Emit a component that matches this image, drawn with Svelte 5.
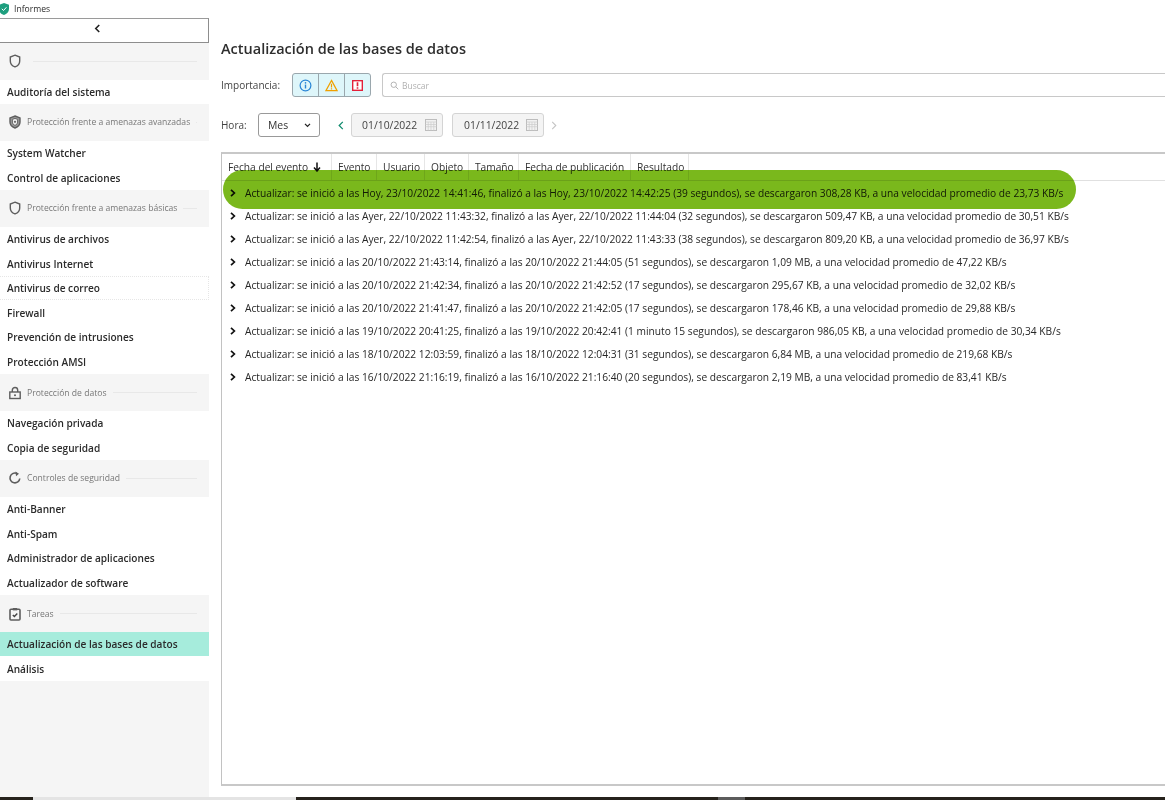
<script>
  const groups = [
    { icon: 'shield', label: '', items: ['Auditoría del sistema'], h: 'first' },
    { icon: 'shield2', label: 'Protección frente a amenazas avanzadas', items: ['System Watcher', 'Control de aplicaciones'] },
    { icon: 'shield', label: 'Protección frente a amenazas básicas', items: ['Antivirus de archivos', 'Antivirus Internet', 'Antivirus de correo', 'Firewall', 'Prevención de intrusiones', 'Protección AMSI'] },
    { icon: 'lock', label: 'Protección de datos', items: ['Navegación privada', 'Copia de seguridad'] },
    { icon: 'sync', label: 'Controles de seguridad', items: ['Anti-Banner', 'Anti-Spam', 'Administrador de aplicaciones', 'Actualizador de software'] },
    { icon: 'task', label: 'Tareas', items: ['Actualización de las bases de datos', 'Análisis'] }
  ];
  const columns = [
    { label: 'Fecha del evento', w: 110, sort: true },
    { label: 'Evento', w: 45 },
    { label: 'Usuario', w: 48 },
    { label: 'Objeto', w: 44 },
    { label: 'Tamaño', w: 50 },
    { label: 'Fecha de publicación', w: 112 },
    { label: 'Resultado', w: 58 }
  ];
  const rows = [
    'Actualizar: se inició a las Hoy, 23/10/2022 14:41:46, finalizó a las Hoy, 23/10/2022 14:42:25 (39 segundos), se descargaron 308,28 KB, a una velocidad promedio de 23,73 KB/s',
    'Actualizar: se inició a las Ayer, 22/10/2022 11:43:32, finalizó a las Ayer, 22/10/2022 11:44:04 (32 segundos), se descargaron 509,47 KB, a una velocidad promedio de 30,51 KB/s',
    'Actualizar: se inició a las Ayer, 22/10/2022 11:42:54, finalizó a las Ayer, 22/10/2022 11:43:33 (38 segundos), se descargaron 809,20 KB, a una velocidad promedio de 36,97 KB/s',
    'Actualizar: se inició a las 20/10/2022 21:43:14, finalizó a las 20/10/2022 21:44:05 (51 segundos), se descargaron 1,09 MB, a una velocidad promedio de 47,22 KB/s',
    'Actualizar: se inició a las 20/10/2022 21:42:34, finalizó a las 20/10/2022 21:42:52 (17 segundos), se descargaron 295,67 KB, a una velocidad promedio de 32,02 KB/s',
    'Actualizar: se inició a las 20/10/2022 21:41:47, finalizó a las 20/10/2022 21:42:05 (17 segundos), se descargaron 178,46 KB, a una velocidad promedio de 29,88 KB/s',
    'Actualizar: se inició a las 19/10/2022 20:41:25, finalizó a las 19/10/2022 20:42:41 (1 minuto 15 segundos), se descargaron 986,05 KB, a una velocidad promedio de 30,34 KB/s',
    'Actualizar: se inició a las 18/10/2022 12:03:59, finalizó a las 18/10/2022 12:04:31 (31 segundos), se descargaron 6,84 MB, a una velocidad promedio de 219,68 KB/s',
    'Actualizar: se inició a las 16/10/2022 21:16:19, finalizó a las 16/10/2022 21:16:40 (20 segundos), se descargaron 2,19 MB, a una velocidad promedio de 83,41 KB/s'
  ];
</script>

{#snippet calendar()}
  <svg class="cal" viewBox="0 0 12 12" width="12" height="12">
    <rect x="0.5" y="0.5" width="11" height="11" fill="#f2f2f2" stroke="#bdbdbd"/>
    <path d="M0.5 3h11M0.5 5.5h11M0.5 7.7h11M3.2 3v8.5M6 3v8.5M8.8 3v8.5" stroke="#cdcdcd" stroke-width="0.7" fill="none"/>
  </svg>
{/snippet}

{#snippet groupIcon(name)}
  <svg viewBox="0 0 14 14" width="14" height="14" fill="none" stroke="#5e5e5e" stroke-width="1.400">
    {#if name === 'shield'}
      <path d="M7 1.200 11.700 3v4c0 3-2 5-4.700 5.900C4.300 12 2.300 10 2.300 7V3z"/>
    {:else if name === 'shield2'}
      <path d="M7 1 12 2.900v4.200c0 3-2.200 5-5 5.900-2.800-.9-5-2.900-5-5.900V2.900z" fill="#999"/>
      <path d="M7 3.400 9.600 4.400v2.700c0 1.500-1 2.600-2.600 3.300-1.600-.7-2.600-1.800-2.600-3.300V4.400z" fill="#eee" stroke="#666" stroke-width="1"/>
      <circle cx="7" cy="6.800" r="1.100" fill="#666" stroke="none"/>
    {:else if name === 'lock'}
      <path d="M4.300 6V4.200a2.700 2.700 0 0 1 5.400 0V6" />
      <rect x="1.800" y="6" width="10.400" height="6.500" />
      <circle cx="7" cy="9.200" r="1" fill="#5e5e5e" stroke="none"/>
    {:else if name === 'sync'}
      <path d="M11.800 7.500A4.900 4.900 0 1 1 8.500 2.300" stroke-width="1.600"/>
      <path d="M7.500 .5 11 2.800 8 5.200z" fill="#5e5e5e" stroke="none"/>
    {:else}
      <rect x="2" y="2.300" width="10" height="10.700" rx="1" stroke-width="1.600"/>
      <rect x="4.800" y="1" width="4.400" height="2.400" fill="#5e5e5e" stroke="none"/>
      <path d="M4.800 8 6.400 9.600 9.300 6.500" stroke="#444"/>
    {/if}
  </svg>
{/snippet}

<div class="app">
  <header class="titlebar">
    <svg class="logo" viewBox="0 0 10 12" width="10" height="12">
      <path d="M5 0 10 1.800V6c0 3-2.200 4.900-5 6-2.800-1.100-5-3-5-6V1.800z" fill="#1e9f7f"/>
      <path d="M2.800 5.800 4.500 7.500 7.400 4.300" fill="none" stroke="#fff" stroke-width="1"/>
    </svg>
    <span>Informes</span>
  </header>

  <div class="body">
    <aside class="sidebar">
      <button class="collapse" aria-label="Contraer">
        <svg viewBox="0 0 8 10" width="7" height="9"><path d="M6 1 2 5l4 4" fill="none" stroke="#222" stroke-width="1.800"/></svg>
      </button>
      {#each groups as g}
        <div class="group" class:tall={g.h === 'first'}>
          <span class="gicon">{@render groupIcon(g.icon)}</span>
          {#if g.label}<span class="glabel">{g.label}</span>{/if}
          <span class="gline"></span>
        </div>
        {#each g.items as item}
          <div class="item" class:active={item === 'Actualización de las bases de datos'} class:dotted={item === 'Antivirus de correo'}>{item}</div>
        {/each}
      {/each}
      <div class="rest"></div>
    </aside>

    <main class="main">
      <h1>Actualización de las bases de datos</h1>

      <div class="filter">
        <span class="lbl">Importancia:</span>
        <div class="levels">
          <span class="lvl">
            <svg viewBox="0 0 14 14" width="13" height="13"><circle cx="7" cy="7" r="5.800" fill="none" stroke="#2a86d6" stroke-width="1.300"/><path d="M7 6v4.200" stroke="#2a86d6" stroke-width="1.500"/><circle cx="7" cy="4.100" r=".9" fill="#2a86d6"/></svg>
          </span>
          <span class="lvl">
            <svg viewBox="0 0 14 14" width="13" height="13"><path d="M7 1.500 13 12.500H1z" fill="none" stroke="#f0a000" stroke-width="1.300"/><path d="M7 5.200v4M7 10v1.300" stroke="#f0a000" stroke-width="1.300"/></svg>
          </span>
          <span class="lvl">
            <svg viewBox="0 0 12 12" width="11" height="11"><rect x=".75" y=".75" width="10.500" height="10.500" fill="#fff" stroke="#e3203a" stroke-width="1.500"/><path d="M6 2.500v4.300M6 8v1.600" stroke="#e3203a" stroke-width="1.800"/></svg>
          </span>
        </div>
        <div class="search">
          <svg viewBox="0 0 12 12" width="9" height="9"><circle cx="5" cy="5" r="3.600" fill="none" stroke="#aaa" stroke-width="1.200"/><path d="M7.700 7.700 11 11" stroke="#aaa" stroke-width="1.200"/></svg>
          <span>Buscar</span>
        </div>
      </div>

      <div class="filter time">
        <span class="lbl">Hora:</span>
        <div class="select">
          <span>Mes</span>
          <svg viewBox="0 0 8 6" width="7" height="5"><path d="M1 1l3 3 3-3" fill="none" stroke="#222" stroke-width="1.500"/></svg>
        </div>
        <svg class="prev" viewBox="0 0 6 10" width="6" height="9"><path d="M5 1 1 5l4 4" fill="none" stroke="#0f8a6d" stroke-width="1.400"/></svg>
        <div class="date"><span>01/10/2022</span>{@render calendar()}</div>
        <div class="date"><span>01/11/2022</span>{@render calendar()}</div>
        <svg class="next" viewBox="0 0 6 10" width="6" height="9"><path d="M1 1l4 4-4 4" fill="none" stroke="#c4c4c4" stroke-width="1.200"/></svg>
      </div>

      <section class="table">
        <div class="thead">
          {#each columns as c}
            <span class="th" style="width:{c.w}px">
              {c.label}
              {#if c.sort}
                <svg viewBox="0 0 8 10" width="8" height="10"><path d="M4 .5v8M1 5.500 4 9l3-3.500" fill="none" stroke="#111" stroke-width="1.500"/></svg>
              {/if}
            </span>
          {/each}
        </div>
        <div class="tbody">
          {#each rows as r}
            <div class="row">
              <svg viewBox="0 0 6 8" width="6" height="8"><path d="M1 .8 4.400 4 1 7.200" fill="none" stroke="#111" stroke-width="1.700"/></svg>
              <span>{r}</span>
            </div>
          {/each}
        </div>
        <div class="marker"></div>
      </section>
    </main>
  </div>

  <footer class="strip">
    <span class="dark s1"></span><span class="light s2"></span><span class="dark s3"></span><span class="gray s4"></span><span class="dark s5"></span>
  </footer>
</div>

<style>
  :global(body) {
    margin: 0;
    background: #fff;
    font-family: "Open Sans", "Noto Sans", "Liberation Sans", sans-serif;
    color: #2a2a2a;
  }
  .app {
    width: 1165px;
    height: 800px;
    display: flex;
    flex-direction: column;
    overflow: hidden;
  }
  .titlebar {
    height: 18px;
    display: flex;
    align-items: center;
    gap: 5px;
    font-size: 8.600px;
    font-weight: 500;
    color: #2b2b2b;
    flex: none;
  }
  .logo { margin-left: -1px; margin-top: -1px; }
  .body { flex: 1; display: flex; min-height: 0; }
  .sidebar {
    width: 209px;
    flex: none;
    display: flex;
    flex-direction: column;
  }
  .collapse {
    height: 24.500px;
    flex: none;
    padding: 0 13px 4px 0;
    background: #fff;
    border: 1px solid #8d8d8d;
    border-left: 0;
    border-top-color: #9a9a9a;
    display: flex;
    align-items: center;
    justify-content: center;
  }
  .group {
    height: 36.700px;
    flex: none;
    background: #f5f5f5;
    display: flex;
    align-items: center;
    padding: 0 12px 0 8px;
    font-size: 8.600px;
    color: #777;
  }
  .group.tall { height: 37px; }
  .group.tall .gicon { margin-right: 11px; }
  .gicon { width: 14px; height: 14px; display: flex; margin-right: 5px; flex: none; }
  .glabel { white-space: nowrap; margin-right: 6px; }
  .gline { flex: 1; height: 1px; background: #e8e8e8; }
  .item {
    height: 24.600px;
    flex: none;
    display: flex;
    align-items: center;
    padding-left: 7px;
    font-size: 10.100px;
    font-weight: 600;
    color: #2b2b2b;
    box-sizing: border-box;
  }
  .item.active { background: #a6ecdc; }
  .item.dotted { border: 1px dotted #e6e6e6; border-left: 0; padding-left: 7px; }
  .rest { flex: 1; background: #f5f5f5; }

  .main { flex: 1; min-width: 0; padding: 0 0 0 12px; display: flex; flex-direction: column; }
  h1 {
    margin: 21px 0 0;
    height: 20px;
    line-height: 20px;
    font-size: 14.500px;
    font-weight: 600;
    color: #2e2e2e;
  }
  .filter { display: flex; align-items: center; margin-top: 14px; height: 24px; flex: none; }
  .lbl { font-size: 10px; color: #444; width: 71px; flex: none; }
  .levels {
    display: flex;
    width: 79px;
    height: 24px;
    box-sizing: border-box;
    border: 1px solid #9aa7ad;
    border-radius: 3px;
    background: #def6fa;
    flex: none;
  }
  .lvl { flex: 1; display: flex; align-items: center; justify-content: center; }
  .lvl + .lvl { border-left: 1px solid #9aa7ad; }
  .search {
    margin-left: 11px;
    flex: 1;
    height: 24px;
    box-sizing: border-box;
    border: 1px solid #c8c8c8;
    border-right: 0;
    border-radius: 3px 0 0 3px;
    display: flex;
    align-items: center;
    gap: 3px;
    padding-left: 7px;
    font-size: 8.500px;
    color: #b0b0b0;
  }
  .time { margin-top: 16px; }
  .time .lbl { width: 37px; }
  .select {
    width: 62px;
    height: 24px;
    box-sizing: border-box;
    border: 1px solid #999;
    border-radius: 3px;
    display: flex;
    align-items: center;
    justify-content: space-between;
    padding: 0 8px 0 9px;
    font-size: 10.400px;
    color: #333;
    flex: none;
  }
  .prev { margin-left: 18px; margin-right: 7px; flex: none; }
  .date {
    width: 92px;
    height: 24px;
    box-sizing: border-box;
    border: 1px solid #d4d4d4;
    border-radius: 3px;
    background: #f4f4f4;
    display: flex;
    align-items: center;
    justify-content: space-between;
    padding: 0 5px 0 10px;
    font-size: 10.400px;
    color: #444;
    flex: none;
  }
  .date + .date { margin-left: 9px; padding-left: 11px; }
  .next { margin-left: 7px; flex: none; }
  .cal { flex: none; }

  .table {
    position: relative;
    margin-top: 15px;
    height: 634px;
    box-sizing: border-box;
    border: 1px solid #c2c2c2;
    border-top: 2px solid #c8c8c8;
    border-right: 0;
    border-bottom: 2px solid #c8c8c8;
    flex: none;
  }
  .thead {
    height: 27px;
    display: flex;
    border-bottom: 1px solid #e0e0e0;
    box-sizing: border-box;
    font-size: 10.200px;
    color: #333;
  }
  .th {
    display: flex;
    align-items: center;
    gap: 5px;
    padding-left: 6px;
    box-sizing: border-box;
    border-right: 1px solid #e6e6e6;
    white-space: nowrap;
    flex: none;
  }
  .row {
    height: 23.100px;
    display: flex;
    align-items: center;
    gap: 9px;
    padding-left: 8px;
    font-size: 10.210px;
    color: #262626;
    white-space: nowrap;
  }
  .row svg { flex: none; }
  .marker {
    position: absolute;
    left: 1px;
    top: 16px;
    width: 853px;
    height: 39px;
    border-radius: 20px;
    background: #7ab81c;
    mix-blend-mode: multiply;
  }
  .strip { height: 3px; display: flex; flex: none; }
  .dark { background: #26221c; }
  .light { background: #e4e4e4; }
  .gray { background: #5c5c5c; }
  .s1 { width: 33px; }
  .s2 { width: 263px; }
  .s3 { width: 422px; }
  .s4 { width: 27px; }
  .s5 { flex: 1; }
</style>
